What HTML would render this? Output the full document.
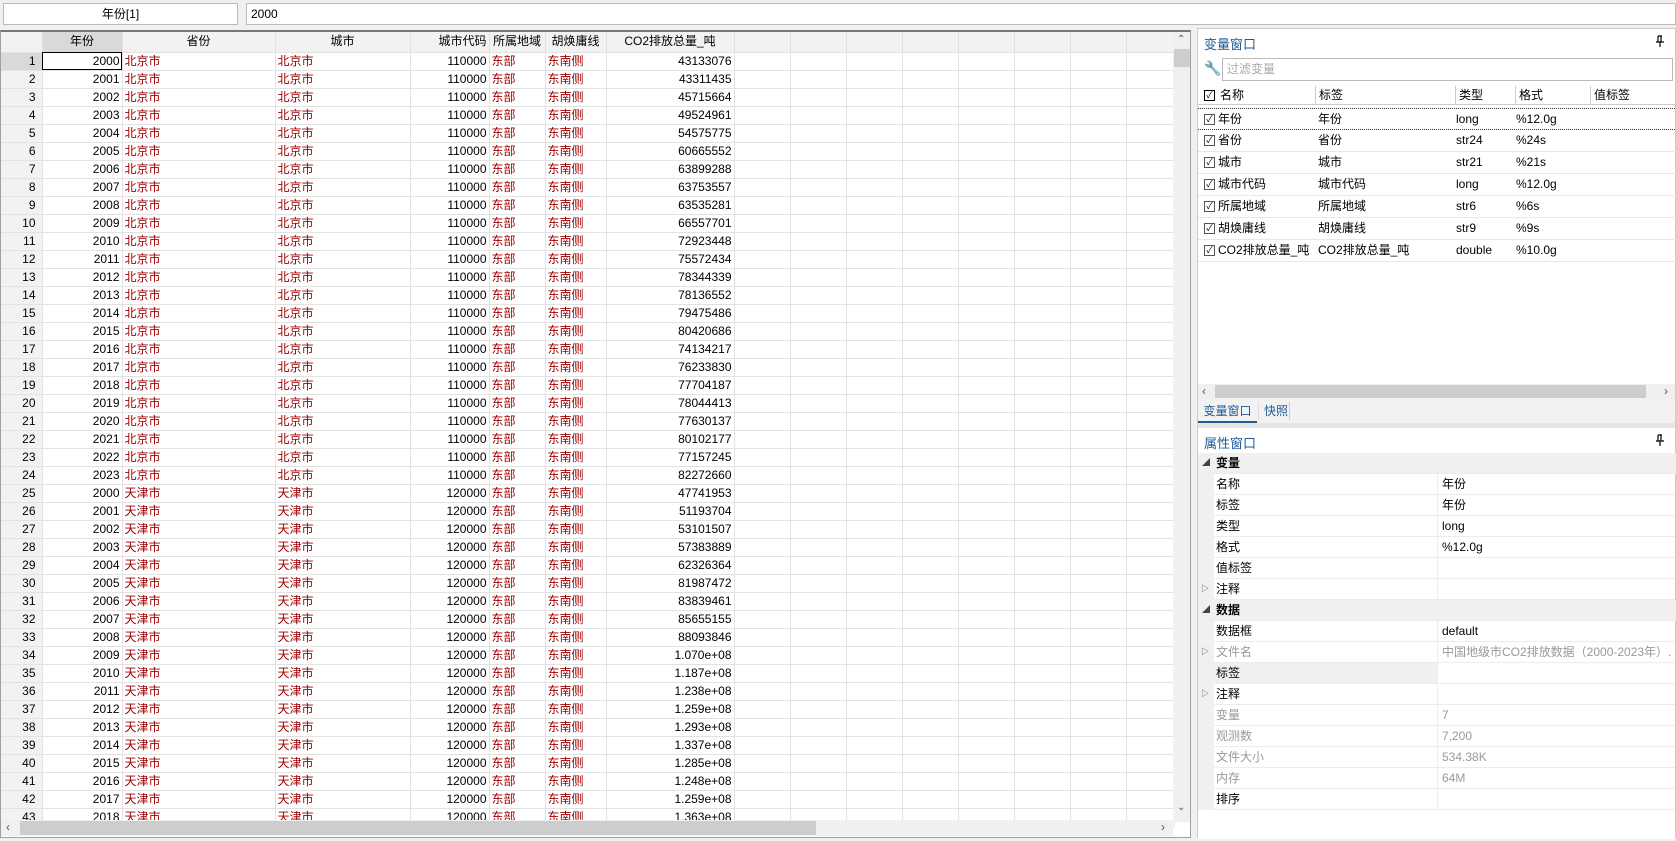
<!DOCTYPE html>
<html><head><meta charset="utf-8"><style>
*{box-sizing:border-box;margin:0;padding:0}
body{width:1676px;height:841px;background:#f0f0f0;font-family:"Liberation Sans","WenQuanYi Zen Hei","Noto Sans CJK SC",sans-serif;font-size:12px;color:#000;position:relative;overflow:hidden}
.abs{position:absolute}
#lbl{left:3px;top:3px;width:235px;height:22px;background:#fff;border:1px solid #bbb;text-align:center;line-height:20px;font-size:12px}
#val{left:246px;top:3px;width:1430px;height:22px;background:#fff;border:1px solid #bbb;line-height:20px;padding-left:4px}
#grid{left:0;top:30px;width:1191px;height:808px;background:#fff;border:1px solid #a0a0a0;border-top:2px solid #777;overflow:hidden}
table{border-collapse:collapse;table-layout:fixed;position:absolute;left:0;top:0}
td,th{height:18px;border-right:1px solid #e2e2e2;border-bottom:1px solid #e2e2e2;padding:0 2px;white-space:nowrap;overflow:hidden;font-weight:normal;line-height:17px}
th{background:#f2f2f2;height:20px;text-align:center}
td.n{background:#f2f2f2;text-align:right;padding-right:6px}
td.r{text-align:right}
td.s{color:#a00000;text-align:left}
.sel{background:#d9d9d9!important}
td.cur{outline:1px solid #000;outline-offset:-1px}
#vs{left:1172px;top:0;width:18px;height:790px;background:#f0f0f0}
#hs{left:0;top:788px;width:1172px;height:16px;background:#f0f0f0}
#rp{left:1197px;top:28px;width:479px;height:810px;background:#fff;border:1px solid #ccc}
.ttl{color:#1e5a96;font-size:13px}
.vr{position:absolute;left:0;width:479px;height:22px;border-bottom:1px solid #e8e8e8;line-height:21px}
.vr span{position:absolute}
.cb{position:absolute;left:6px;top:5px;width:11px;height:11px;border:1px solid #555;font-size:9px;line-height:9px;text-align:center}
.pr{position:absolute;left:0;width:479px;height:21px;line-height:20px;border-bottom:1px solid #ececec}
.pr .k{position:absolute;left:16px;width:224px;height:20px;padding-left:2px;border-right:1px solid #ececec}
.pr .v{position:absolute;left:241px;padding-left:3px;white-space:nowrap;overflow:hidden;width:236px}
.pr.h{background:#f0f0f0;font-weight:bold}
.pr.h .k{border:none}
.g{color:#999}
.tri{position:absolute;left:4px;font-size:8px;color:#444}
</style></head><body>
<div id="lbl" class="abs">年份[1]</div>
<div id="val" class="abs">2000</div>
<div id="grid" class="abs">
<table>
<colgroup><col style="width:41px"><col style="width:80px"><col style="width:153px"><col style="width:135px"><col style="width:79px"><col style="width:56px"><col style="width:61px"><col style="width:128px"><col style="width:56px"><col style="width:56px"><col style="width:56px"><col style="width:56px"><col style="width:56px"><col style="width:56px"><col style="width:56px"><col style="width:48px"></colgroup>
<tr><th></th><th class="sel">年份</th><th>省份</th><th>城市</th><th style="text-align:right">城市代码</th><th>所属地域</th><th>胡焕庸线</th><th>CO2排放总量_吨</th><th></th><th></th><th></th><th></th><th></th><th></th><th></th><th></th></tr>
<tr><td class="n sel">1</td><td class="r cur">2000</td><td class="s">北京市</td><td class="s">北京市</td><td class="r">110000</td><td class="s">东部</td><td class="s">东南侧</td><td class="r">43133076</td><td></td><td></td><td></td><td></td><td></td><td></td><td></td><td></td></tr>
<tr><td class="n">2</td><td class="r">2001</td><td class="s">北京市</td><td class="s">北京市</td><td class="r">110000</td><td class="s">东部</td><td class="s">东南侧</td><td class="r">43311435</td><td></td><td></td><td></td><td></td><td></td><td></td><td></td><td></td></tr>
<tr><td class="n">3</td><td class="r">2002</td><td class="s">北京市</td><td class="s">北京市</td><td class="r">110000</td><td class="s">东部</td><td class="s">东南侧</td><td class="r">45715664</td><td></td><td></td><td></td><td></td><td></td><td></td><td></td><td></td></tr>
<tr><td class="n">4</td><td class="r">2003</td><td class="s">北京市</td><td class="s">北京市</td><td class="r">110000</td><td class="s">东部</td><td class="s">东南侧</td><td class="r">49524961</td><td></td><td></td><td></td><td></td><td></td><td></td><td></td><td></td></tr>
<tr><td class="n">5</td><td class="r">2004</td><td class="s">北京市</td><td class="s">北京市</td><td class="r">110000</td><td class="s">东部</td><td class="s">东南侧</td><td class="r">54575775</td><td></td><td></td><td></td><td></td><td></td><td></td><td></td><td></td></tr>
<tr><td class="n">6</td><td class="r">2005</td><td class="s">北京市</td><td class="s">北京市</td><td class="r">110000</td><td class="s">东部</td><td class="s">东南侧</td><td class="r">60665552</td><td></td><td></td><td></td><td></td><td></td><td></td><td></td><td></td></tr>
<tr><td class="n">7</td><td class="r">2006</td><td class="s">北京市</td><td class="s">北京市</td><td class="r">110000</td><td class="s">东部</td><td class="s">东南侧</td><td class="r">63899288</td><td></td><td></td><td></td><td></td><td></td><td></td><td></td><td></td></tr>
<tr><td class="n">8</td><td class="r">2007</td><td class="s">北京市</td><td class="s">北京市</td><td class="r">110000</td><td class="s">东部</td><td class="s">东南侧</td><td class="r">63753557</td><td></td><td></td><td></td><td></td><td></td><td></td><td></td><td></td></tr>
<tr><td class="n">9</td><td class="r">2008</td><td class="s">北京市</td><td class="s">北京市</td><td class="r">110000</td><td class="s">东部</td><td class="s">东南侧</td><td class="r">63535281</td><td></td><td></td><td></td><td></td><td></td><td></td><td></td><td></td></tr>
<tr><td class="n">10</td><td class="r">2009</td><td class="s">北京市</td><td class="s">北京市</td><td class="r">110000</td><td class="s">东部</td><td class="s">东南侧</td><td class="r">66557701</td><td></td><td></td><td></td><td></td><td></td><td></td><td></td><td></td></tr>
<tr><td class="n">11</td><td class="r">2010</td><td class="s">北京市</td><td class="s">北京市</td><td class="r">110000</td><td class="s">东部</td><td class="s">东南侧</td><td class="r">72923448</td><td></td><td></td><td></td><td></td><td></td><td></td><td></td><td></td></tr>
<tr><td class="n">12</td><td class="r">2011</td><td class="s">北京市</td><td class="s">北京市</td><td class="r">110000</td><td class="s">东部</td><td class="s">东南侧</td><td class="r">75572434</td><td></td><td></td><td></td><td></td><td></td><td></td><td></td><td></td></tr>
<tr><td class="n">13</td><td class="r">2012</td><td class="s">北京市</td><td class="s">北京市</td><td class="r">110000</td><td class="s">东部</td><td class="s">东南侧</td><td class="r">78344339</td><td></td><td></td><td></td><td></td><td></td><td></td><td></td><td></td></tr>
<tr><td class="n">14</td><td class="r">2013</td><td class="s">北京市</td><td class="s">北京市</td><td class="r">110000</td><td class="s">东部</td><td class="s">东南侧</td><td class="r">78136552</td><td></td><td></td><td></td><td></td><td></td><td></td><td></td><td></td></tr>
<tr><td class="n">15</td><td class="r">2014</td><td class="s">北京市</td><td class="s">北京市</td><td class="r">110000</td><td class="s">东部</td><td class="s">东南侧</td><td class="r">79475486</td><td></td><td></td><td></td><td></td><td></td><td></td><td></td><td></td></tr>
<tr><td class="n">16</td><td class="r">2015</td><td class="s">北京市</td><td class="s">北京市</td><td class="r">110000</td><td class="s">东部</td><td class="s">东南侧</td><td class="r">80420686</td><td></td><td></td><td></td><td></td><td></td><td></td><td></td><td></td></tr>
<tr><td class="n">17</td><td class="r">2016</td><td class="s">北京市</td><td class="s">北京市</td><td class="r">110000</td><td class="s">东部</td><td class="s">东南侧</td><td class="r">74134217</td><td></td><td></td><td></td><td></td><td></td><td></td><td></td><td></td></tr>
<tr><td class="n">18</td><td class="r">2017</td><td class="s">北京市</td><td class="s">北京市</td><td class="r">110000</td><td class="s">东部</td><td class="s">东南侧</td><td class="r">76233830</td><td></td><td></td><td></td><td></td><td></td><td></td><td></td><td></td></tr>
<tr><td class="n">19</td><td class="r">2018</td><td class="s">北京市</td><td class="s">北京市</td><td class="r">110000</td><td class="s">东部</td><td class="s">东南侧</td><td class="r">77704187</td><td></td><td></td><td></td><td></td><td></td><td></td><td></td><td></td></tr>
<tr><td class="n">20</td><td class="r">2019</td><td class="s">北京市</td><td class="s">北京市</td><td class="r">110000</td><td class="s">东部</td><td class="s">东南侧</td><td class="r">78044413</td><td></td><td></td><td></td><td></td><td></td><td></td><td></td><td></td></tr>
<tr><td class="n">21</td><td class="r">2020</td><td class="s">北京市</td><td class="s">北京市</td><td class="r">110000</td><td class="s">东部</td><td class="s">东南侧</td><td class="r">77630137</td><td></td><td></td><td></td><td></td><td></td><td></td><td></td><td></td></tr>
<tr><td class="n">22</td><td class="r">2021</td><td class="s">北京市</td><td class="s">北京市</td><td class="r">110000</td><td class="s">东部</td><td class="s">东南侧</td><td class="r">80102177</td><td></td><td></td><td></td><td></td><td></td><td></td><td></td><td></td></tr>
<tr><td class="n">23</td><td class="r">2022</td><td class="s">北京市</td><td class="s">北京市</td><td class="r">110000</td><td class="s">东部</td><td class="s">东南侧</td><td class="r">77157245</td><td></td><td></td><td></td><td></td><td></td><td></td><td></td><td></td></tr>
<tr><td class="n">24</td><td class="r">2023</td><td class="s">北京市</td><td class="s">北京市</td><td class="r">110000</td><td class="s">东部</td><td class="s">东南侧</td><td class="r">82272660</td><td></td><td></td><td></td><td></td><td></td><td></td><td></td><td></td></tr>
<tr><td class="n">25</td><td class="r">2000</td><td class="s">天津市</td><td class="s">天津市</td><td class="r">120000</td><td class="s">东部</td><td class="s">东南侧</td><td class="r">47741953</td><td></td><td></td><td></td><td></td><td></td><td></td><td></td><td></td></tr>
<tr><td class="n">26</td><td class="r">2001</td><td class="s">天津市</td><td class="s">天津市</td><td class="r">120000</td><td class="s">东部</td><td class="s">东南侧</td><td class="r">51193704</td><td></td><td></td><td></td><td></td><td></td><td></td><td></td><td></td></tr>
<tr><td class="n">27</td><td class="r">2002</td><td class="s">天津市</td><td class="s">天津市</td><td class="r">120000</td><td class="s">东部</td><td class="s">东南侧</td><td class="r">53101507</td><td></td><td></td><td></td><td></td><td></td><td></td><td></td><td></td></tr>
<tr><td class="n">28</td><td class="r">2003</td><td class="s">天津市</td><td class="s">天津市</td><td class="r">120000</td><td class="s">东部</td><td class="s">东南侧</td><td class="r">57383889</td><td></td><td></td><td></td><td></td><td></td><td></td><td></td><td></td></tr>
<tr><td class="n">29</td><td class="r">2004</td><td class="s">天津市</td><td class="s">天津市</td><td class="r">120000</td><td class="s">东部</td><td class="s">东南侧</td><td class="r">62326364</td><td></td><td></td><td></td><td></td><td></td><td></td><td></td><td></td></tr>
<tr><td class="n">30</td><td class="r">2005</td><td class="s">天津市</td><td class="s">天津市</td><td class="r">120000</td><td class="s">东部</td><td class="s">东南侧</td><td class="r">81987472</td><td></td><td></td><td></td><td></td><td></td><td></td><td></td><td></td></tr>
<tr><td class="n">31</td><td class="r">2006</td><td class="s">天津市</td><td class="s">天津市</td><td class="r">120000</td><td class="s">东部</td><td class="s">东南侧</td><td class="r">83839461</td><td></td><td></td><td></td><td></td><td></td><td></td><td></td><td></td></tr>
<tr><td class="n">32</td><td class="r">2007</td><td class="s">天津市</td><td class="s">天津市</td><td class="r">120000</td><td class="s">东部</td><td class="s">东南侧</td><td class="r">85655155</td><td></td><td></td><td></td><td></td><td></td><td></td><td></td><td></td></tr>
<tr><td class="n">33</td><td class="r">2008</td><td class="s">天津市</td><td class="s">天津市</td><td class="r">120000</td><td class="s">东部</td><td class="s">东南侧</td><td class="r">88093846</td><td></td><td></td><td></td><td></td><td></td><td></td><td></td><td></td></tr>
<tr><td class="n">34</td><td class="r">2009</td><td class="s">天津市</td><td class="s">天津市</td><td class="r">120000</td><td class="s">东部</td><td class="s">东南侧</td><td class="r">1.070e+08</td><td></td><td></td><td></td><td></td><td></td><td></td><td></td><td></td></tr>
<tr><td class="n">35</td><td class="r">2010</td><td class="s">天津市</td><td class="s">天津市</td><td class="r">120000</td><td class="s">东部</td><td class="s">东南侧</td><td class="r">1.187e+08</td><td></td><td></td><td></td><td></td><td></td><td></td><td></td><td></td></tr>
<tr><td class="n">36</td><td class="r">2011</td><td class="s">天津市</td><td class="s">天津市</td><td class="r">120000</td><td class="s">东部</td><td class="s">东南侧</td><td class="r">1.238e+08</td><td></td><td></td><td></td><td></td><td></td><td></td><td></td><td></td></tr>
<tr><td class="n">37</td><td class="r">2012</td><td class="s">天津市</td><td class="s">天津市</td><td class="r">120000</td><td class="s">东部</td><td class="s">东南侧</td><td class="r">1.259e+08</td><td></td><td></td><td></td><td></td><td></td><td></td><td></td><td></td></tr>
<tr><td class="n">38</td><td class="r">2013</td><td class="s">天津市</td><td class="s">天津市</td><td class="r">120000</td><td class="s">东部</td><td class="s">东南侧</td><td class="r">1.293e+08</td><td></td><td></td><td></td><td></td><td></td><td></td><td></td><td></td></tr>
<tr><td class="n">39</td><td class="r">2014</td><td class="s">天津市</td><td class="s">天津市</td><td class="r">120000</td><td class="s">东部</td><td class="s">东南侧</td><td class="r">1.337e+08</td><td></td><td></td><td></td><td></td><td></td><td></td><td></td><td></td></tr>
<tr><td class="n">40</td><td class="r">2015</td><td class="s">天津市</td><td class="s">天津市</td><td class="r">120000</td><td class="s">东部</td><td class="s">东南侧</td><td class="r">1.285e+08</td><td></td><td></td><td></td><td></td><td></td><td></td><td></td><td></td></tr>
<tr><td class="n">41</td><td class="r">2016</td><td class="s">天津市</td><td class="s">天津市</td><td class="r">120000</td><td class="s">东部</td><td class="s">东南侧</td><td class="r">1.248e+08</td><td></td><td></td><td></td><td></td><td></td><td></td><td></td><td></td></tr>
<tr><td class="n">42</td><td class="r">2017</td><td class="s">天津市</td><td class="s">天津市</td><td class="r">120000</td><td class="s">东部</td><td class="s">东南侧</td><td class="r">1.259e+08</td><td></td><td></td><td></td><td></td><td></td><td></td><td></td><td></td></tr>
<tr><td class="n">43</td><td class="r">2018</td><td class="s">天津市</td><td class="s">天津市</td><td class="r">120000</td><td class="s">东部</td><td class="s">东南侧</td><td class="r">1.363e+08</td><td></td><td></td><td></td><td></td><td></td><td></td><td></td><td></td></tr>
</table>
<div id="vs" class="abs">
 <div class="abs" style="left:4px;top:2px;font-size:10px;color:#555">&#8963;</div>
 <div class="abs" style="left:1px;top:17px;width:16px;height:18px;background:#cdcdcd"></div>
 <div class="abs" style="left:4px;top:770px;font-size:10px;color:#555">&#8964;</div>
</div>
<div id="hs" class="abs">
 <div class="abs" style="left:5px;top:0;font-size:12px;color:#555;line-height:15px">&#8249;</div>
 <div class="abs" style="left:19px;top:1px;width:796px;height:14px;background:#cdcdcd"></div>
 <div class="abs" style="left:1160px;top:0;font-size:12px;color:#555;line-height:15px">&#8250;</div>
</div>
</div>

<div id="rp" class="abs">
 <div class="abs ttl" style="left:6px;top:5px">变量窗口</div>
 <svg class="abs" style="left:458px;top:6px" width="8" height="12" viewBox="0 0 8 12"><path d="M2 1h4M2 1v6M5 1v6M0 7h8M4 7v5" stroke="#000" stroke-width="1.2" fill="none"/></svg>
 <div class="abs" style="left:6px;top:31px;font-size:14px;color:#777">&#128295;</div>
 <div class="abs" style="left:24px;top:29px;width:451px;height:23px;border:1px solid #bbb;color:#aaa;line-height:21px;padding-left:4px">过滤变量</div>
 <div class="vr" style="top:57px;height:19px;line-height:19px;border-bottom:1px solid #ccc">
  <div class="cb" style="top:4px;border-color:#000">&#10003;</div>
  <span style="left:22px">名称</span><span style="left:117px;border-left:1px solid #ccc;padding-left:3px">标签</span><span style="left:257px;border-left:1px solid #ccc;padding-left:3px">类型</span><span style="left:317px;border-left:1px solid #ccc;padding-left:3px">格式</span><span style="left:392px;border-left:1px solid #ccc;padding-left:3px">值标签</span>
 </div>
 <div class="vr" style="top:79px;border-top:1px dotted #333;border-bottom:1px dotted #333"><div class="cb">&#10003;</div><span style="left:20px">年份</span><span style="left:120px">年份</span><span style="left:258px">long</span><span style="left:318px">%12.0g</span></div>
 <div class="vr" style="top:101px"><div class="cb">&#10003;</div><span style="left:20px">省份</span><span style="left:120px">省份</span><span style="left:258px">str24</span><span style="left:318px">%24s</span></div>
 <div class="vr" style="top:123px"><div class="cb">&#10003;</div><span style="left:20px">城市</span><span style="left:120px">城市</span><span style="left:258px">str21</span><span style="left:318px">%21s</span></div>
 <div class="vr" style="top:145px"><div class="cb">&#10003;</div><span style="left:20px">城市代码</span><span style="left:120px">城市代码</span><span style="left:258px">long</span><span style="left:318px">%12.0g</span></div>
 <div class="vr" style="top:167px"><div class="cb">&#10003;</div><span style="left:20px">所属地域</span><span style="left:120px">所属地域</span><span style="left:258px">str6</span><span style="left:318px">%6s</span></div>
 <div class="vr" style="top:189px"><div class="cb">&#10003;</div><span style="left:20px">胡焕庸线</span><span style="left:120px">胡焕庸线</span><span style="left:258px">str9</span><span style="left:318px">%9s</span></div>
 <div class="vr" style="top:211px"><div class="cb">&#10003;</div><span style="left:20px">CO2排放总量_吨</span><span style="left:120px">CO2排放总量_吨</span><span style="left:258px">double</span><span style="left:318px">%10.0g</span></div>
 <div class="abs" style="left:0;top:355px;width:477px;height:15px;background:#f0f0f0">
  <div class="abs" style="left:4px;top:0;color:#555;line-height:14px">&#8249;</div>
  <div class="abs" style="left:17px;top:1px;width:431px;height:13px;background:#cdcdcd"></div>
  <div class="abs" style="left:466px;top:0;color:#555;line-height:14px">&#8250;</div>
 </div>
 <div class="abs" style="left:0;top:370px;width:477px;height:29px;background:#f2f2f2;border-bottom:5px solid #e6e6e6">
  <div class="abs" style="left:0;top:0;width:59px;height:24px;border-bottom:2px solid #1e5a96;color:#1e5a96;text-align:center;line-height:24px">变量窗口</div>
  <div class="abs" style="left:60px;top:3px;width:32px;height:18px;border-right:1px solid #ccc;border-left:1px solid #ddd;color:#1e5a96;line-height:18px;padding-left:5px">快照</div>
 </div>
 <div class="abs ttl" style="left:6px;top:404px">属性窗口</div>
 <svg class="abs" style="left:458px;top:405px" width="8" height="12" viewBox="0 0 8 12"><path d="M2 1h4M2 1v6M5 1v6M0 7h8M4 7v5" stroke="#000" stroke-width="1.2" fill="none"/></svg>
 <div class="abs" style="left:0;top:424px;width:477px;height:386px;background:#f0f0f0"></div>
 <div class="abs" style="left:0;top:424px;width:477px">
  <div class="pr h" style="top:0"><span class="tri">&#9698;</span><span class="k" style="border:none">变量</span></div>
  <div class="pr" style="top:21px;background:#fff;left:16px;width:461px"><span class="k" style="left:0">名称</span><span class="v" style="left:225px">年份</span></div>
  <div class="pr" style="top:42px;background:#fff;left:16px;width:461px"><span class="k" style="left:0">标签</span><span class="v" style="left:225px">年份</span></div>
  <div class="pr" style="top:63px;background:#fff;left:16px;width:461px"><span class="k" style="left:0">类型</span><span class="v" style="left:225px">long</span></div>
  <div class="pr" style="top:84px;background:#fff;left:16px;width:461px"><span class="k" style="left:0">格式</span><span class="v" style="left:225px">%12.0g</span></div>
  <div class="pr" style="top:105px;background:#fff;left:16px;width:461px"><span class="k" style="left:0">值标签</span><span class="v" style="left:225px"></span></div>
  <div class="pr" style="top:126px;background:#fff;left:16px;width:461px"><span class="tri" style="left:-13px">&#9655;</span><span class="k" style="left:0">注释</span><span class="v" style="left:225px"></span></div>
  <div class="pr h" style="top:147px"><span class="tri">&#9698;</span><span class="k" style="border:none">数据</span></div>
  <div class="pr" style="top:168px;background:#fff;left:16px;width:461px"><span class="k" style="left:0">数据框</span><span class="v" style="left:225px">default</span></div>
  <div class="pr g" style="top:189px;background:#fff;left:16px;width:461px"><span class="tri" style="left:-13px">&#9655;</span><span class="k" style="left:0">文件名</span><span class="v" style="left:225px">中国地级市CO2排放数据（2000-2023年）.</span></div>
  <div class="pr" style="top:210px;background:#fff;left:16px;width:461px"><span class="k" style="left:0;background:#f0f0f0">标签</span><span class="v" style="left:225px"></span></div>
  <div class="pr" style="top:231px;background:#fff;left:16px;width:461px"><span class="tri" style="left:-13px">&#9655;</span><span class="k" style="left:0">注释</span><span class="v" style="left:225px"></span></div>
  <div class="pr g" style="top:252px;background:#fff;left:16px;width:461px"><span class="k" style="left:0">变量</span><span class="v" style="left:225px">7</span></div>
  <div class="pr g" style="top:273px;background:#fff;left:16px;width:461px"><span class="k" style="left:0">观测数</span><span class="v" style="left:225px">7,200</span></div>
  <div class="pr g" style="top:294px;background:#fff;left:16px;width:461px"><span class="k" style="left:0">文件大小</span><span class="v" style="left:225px">534.38K</span></div>
  <div class="pr g" style="top:315px;background:#fff;left:16px;width:461px"><span class="k" style="left:0">内存</span><span class="v" style="left:225px">64M</span></div>
  <div class="pr" style="top:336px;background:#fff;left:16px;width:461px"><span class="k" style="left:0">排序</span><span class="v" style="left:225px"></span></div>
  <div class="abs" style="top:357px;left:0;width:477px;height:29px;background:#fff"></div>
 </div>
</div>
</body></html>
